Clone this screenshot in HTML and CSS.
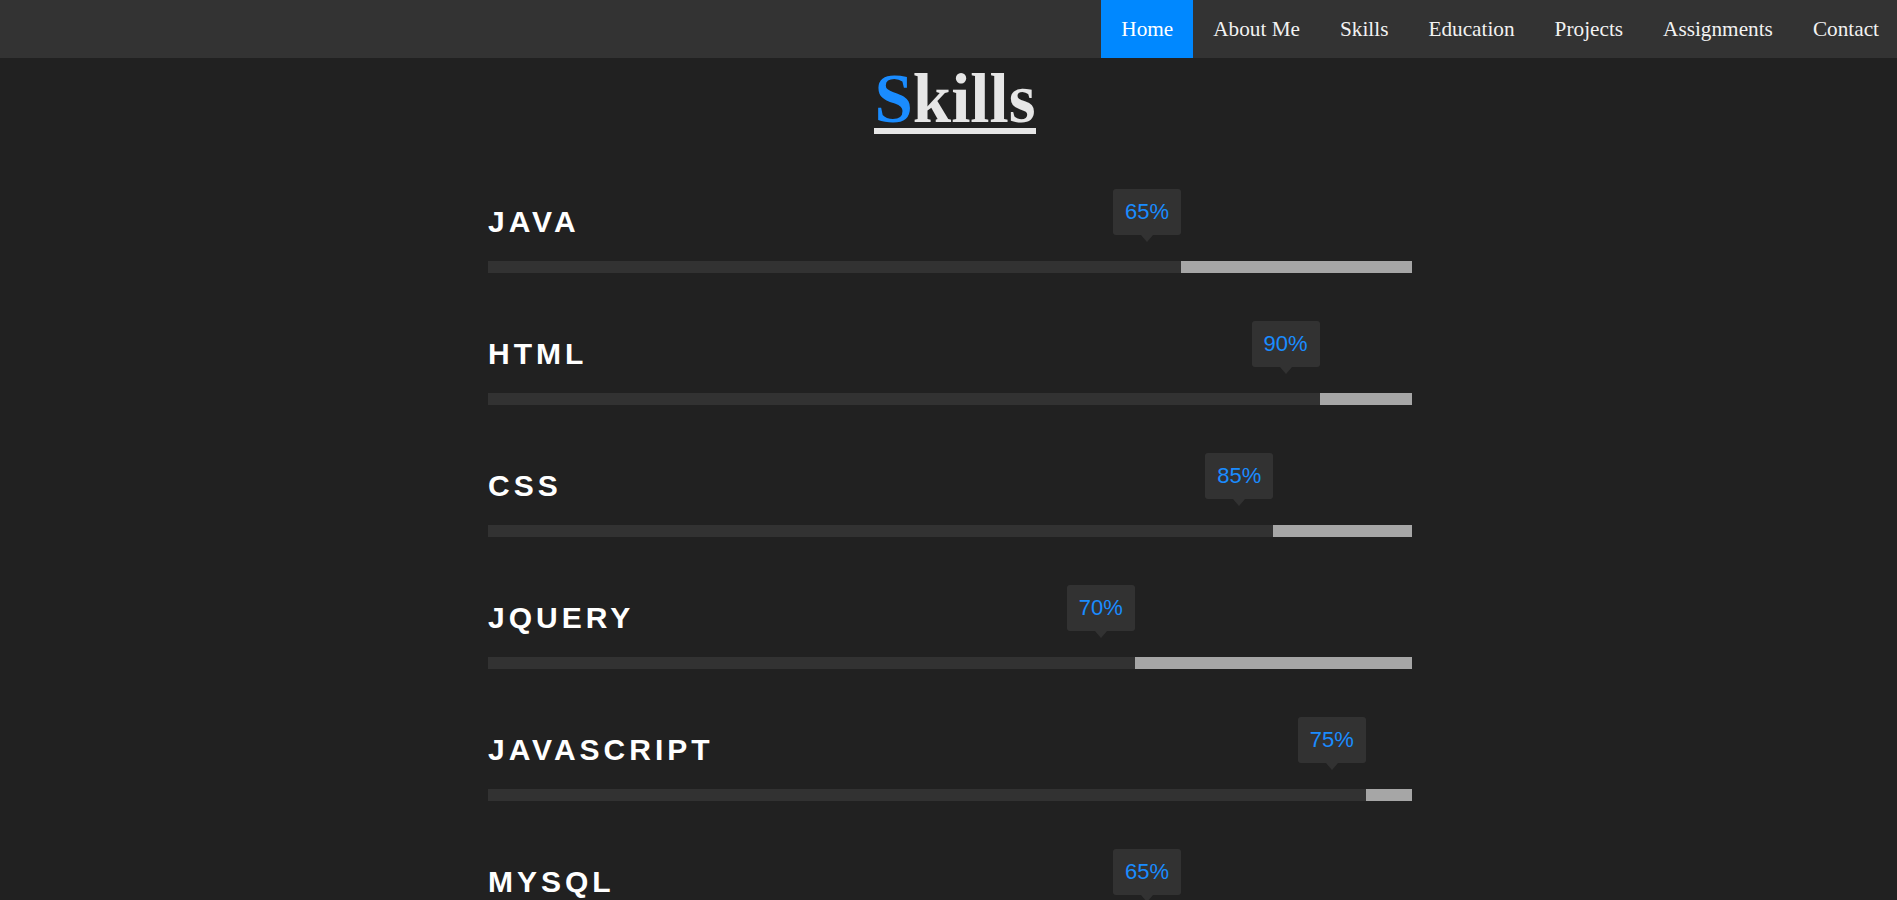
FILE: index.html
```html
<!DOCTYPE html>
<html lang="en">
<head>
<meta charset="utf-8">
<title>Skills</title>
<link rel="stylesheet" href="styles.css">
</head>
<body>
<nav class="topnav">
  <ul class="menu">
    <li class="menu-item active">Home</li>
    <li class="menu-item">About Me</li>
    <li class="menu-item">Skills</li>
    <li class="menu-item">Education</li>
    <li class="menu-item">Projects</li>
    <li class="menu-item">Assignments</li>
    <li class="menu-item">Contact</li>
  </ul>
</nav>
<header class="title-wrap">
  <h1 class="title"><span class="accent">S</span><span>kills</span></h1>
</header>
<main class="skills-wrap">
  <div class="skills">
    <div class="skill">
      <div class="skill-name">JAVA</div>
      <div class="bar"><div class="fill" style="width:75%"><span class="tip">65%</span></div></div>
    </div>
    <div class="skill">
      <div class="skill-name">HTML</div>
      <div class="bar"><div class="fill" style="width:90%"><span class="tip">90%</span></div></div>
    </div>
    <div class="skill">
      <div class="skill-name">CSS</div>
      <div class="bar"><div class="fill" style="width:85%"><span class="tip">85%</span></div></div>
    </div>
    <div class="skill">
      <div class="skill-name">JQUERY</div>
      <div class="bar"><div class="fill" style="width:70%"><span class="tip">70%</span></div></div>
    </div>
    <div class="skill">
      <div class="skill-name">JAVASCRIPT</div>
      <div class="bar"><div class="fill" style="width:95%"><span class="tip">75%</span></div></div>
    </div>
    <div class="skill">
      <div class="skill-name">MYSQL</div>
      <div class="bar"><div class="fill" style="width:75%"><span class="tip">65%</span></div></div>
    </div>
  </div>
</main>
</body>
</html>
```
FILE: styles.css
```css
html, body {
  margin: 0;
  padding: 0;
  background: #212121;
}

body {
  font-family: "Liberation Serif", "Times New Roman", serif;
  color: #e6e6e6;
}

.topnav {
  background: #333333;
  height: 58px;
}

.menu {
  list-style: none;
  margin: 0 -2px 0 0;
  padding: 0;
  display: flex;
  justify-content: flex-end;
  height: 58px;
}

.menu-item {
  font-size: 21.25px;
  line-height: 58px;
  padding: 0 20px;
  color: #f2f2f2;
}

.menu-item.active {
  background: #0088ff;
  color: #ffffff;
}

.title-wrap {
  display: flex;
  justify-content: center;
  margin-top: 12px;
  padding-left: 13px;
}

.title {
  margin: 0;
  font-family: "Liberation Serif", "Times New Roman", serif;
  font-weight: bold;
  font-size: 69px;
  line-height: 58px;
  color: #e6e6e6;
  border-bottom: 6px solid #e6e6e6;
}

.accent {
  color: #1a8cff;
}

.skills-wrap {
  display: flex;
  justify-content: center;
  padding-left: 3px;
  margin-top: 71px;
}

.skills {
  width: 924px;
  display: flex;
  flex-direction: column;
  gap: 64px;
}

.skill-name {
  font-family: "Liberation Sans", Arial, sans-serif;
  font-weight: bold;
  font-size: 30px;
  line-height: 34px;
  letter-spacing: 4px;
  color: #ffffff;
  margin-bottom: 22px;
}

.bar {
  height: 12px;
  background: #a6a6a6;
}

.fill {
  position: relative;
  height: 12px;
  background: #323232;
}

.tip {
  position: absolute;
  right: 0;
  bottom: 38px;
  width: 68px;
  height: 46px;
  line-height: 46px;
  text-align: center;
  background: #323232;
  border-radius: 3px;
  font-family: "Liberation Sans", Arial, sans-serif;
  font-size: 22px;
  color: #1a8cff;
}

.tip::after {
  content: "";
  position: absolute;
  left: 50%;
  top: 100%;
  margin-left: -6px;
  border-left: 6px solid transparent;
  border-right: 6px solid transparent;
  border-top: 7px solid #323232;
}
```
